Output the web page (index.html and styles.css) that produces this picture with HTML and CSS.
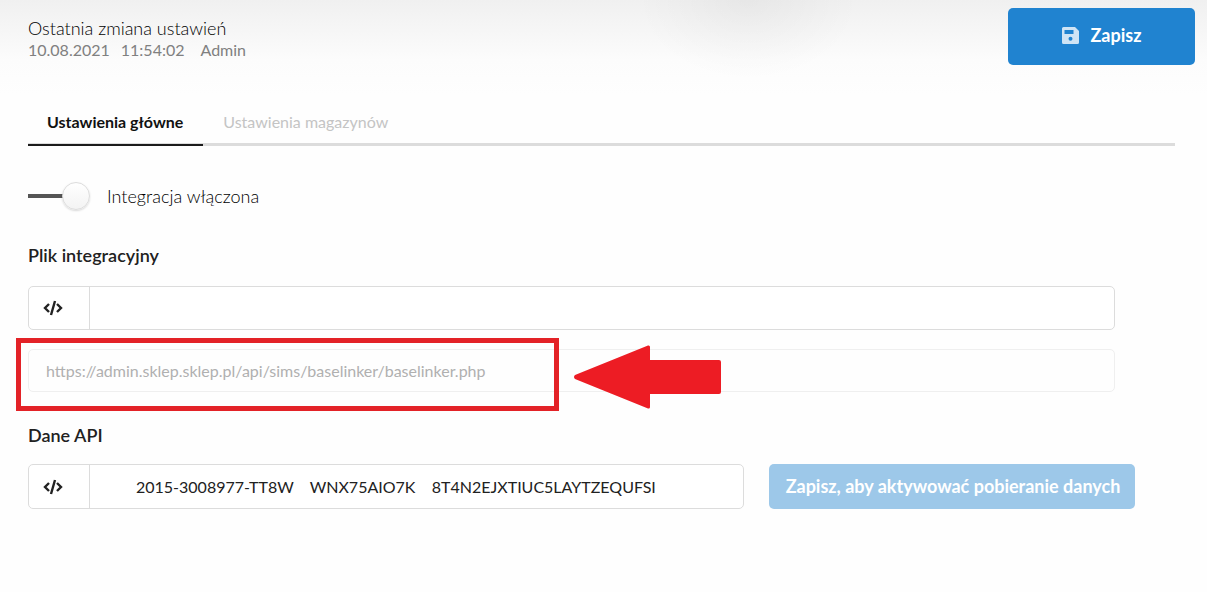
FILE: index.html
```
<!DOCTYPE html>
<html lang="pl">
<head>
    <meta charset="UTF-8">
    <meta name="viewport" content="width=device-width, initial-scale=1.0">
    <title>Ustawienia integracji</title>
    <link rel="stylesheet" href="styles.css">
</head>
<body>
    <form id="settingsForm">
        <header class="top">
            <div class="last-change">
                <p class="last-title">Ostatnia zmiana ustawień</p>
                <p class="last-info">
                    <span>10.08.2021</span>
                    <span>11:54:02</span>
                    <span class="user">Admin</span>
                </p>
            </div>
            <button type="submit" class="btn btn-save">
                <svg class="icon-save" viewBox="0 0 17 17" aria-hidden="true">
                    <path fill="currentColor" fill-rule="evenodd" d="M1.500 0h11.500l4 4v11.500a1.500 1.500 0 0 1-1.500 1.500H1.500a1.500 1.500 0 0 1-1.500-1.500V1.500a1.500 1.500 0 0 1 1.500-1.500zM2.500 3v4h9V3zM8.500 9.700a2 2 0 1 0 0 4a2 2 0 1 0 0-4z"/>
                </svg>
                Zapisz
            </button>
        </header>

        <!-- Zakładki -->
        <nav class="tabs">
            <a href="#glowne" class="tab active">Ustawienia główne</a>
            <a href="#magazyny" class="tab">Ustawienia magazynów</a>
        </nav>

        <main class="content" id="glowne">
            <div class="switch">
                <input type="checkbox" id="integracja" name="integracja" checked>
                <label for="integracja">Integracja włączona</label>
            </div>

            <!-- Plik integracyjny -->
            <label class="field-label" for="plik">Plik integracyjny</label>
            <div class="input-group">
                <span class="addon">
                    <svg class="icon-code" viewBox="0 0 20 16" aria-hidden="true">
                        <path d="M6 4L2 8l4 4M14 4l4 4-4 4M12 1L8 15"/>
                    </svg>
                </span>
                <input type="text" id="plik" name="plik">
            </div>
            <div class="url-row">
                <input type="text" class="url" name="url" aria-label="Adres pliku" value="https://admin.sklep.sklep.pl/api/sims/baselinker/baselinker.php" disabled>
                <span class="frame"></span>
                <svg class="arrow" viewBox="0 0 147 64" aria-hidden="true">
                    <path d="M1 30L74 0.500Q76 0 76 2V15H145Q147 15 147 17V47Q147 49 145 49H76V62Q76 64 74 63.500L1 34Q-1 32 1 30z"/>
                </svg>
            </div>

            <!-- Dane API -->
            <label class="field-label" for="api">Dane API</label>
            <div class="api-row">
                <div class="input-group">
                    <span class="addon">
                        <svg class="icon-code" viewBox="0 0 20 16" aria-hidden="true">
                            <path d="M6 4L2 8l4 4M14 4l4 4-4 4M12 1L8 15"/>
                        </svg>
                    </span>
                    <input type="text" id="api" name="api" class="api-key" value="2015-3008977-TT8W    WNX75AIO7K    8T4N2EJXTIUC5LAYTZEQUFSI">
                </div>
                <button type="button" class="btn btn-fetch" disabled>Zapisz, aby aktywować pobieranie danych</button>
            </div>
        </main>
    </form>
</body>
</html>
```
FILE: styles.css
```
* {
    box-sizing: border-box;
}

body {
    margin: 0;
    font-family: Lato, sans-serif;
    font-size: 16px;
    color: #212121;
    background-color: #fefefe;
}

p {
    margin: 0;
}

input, button {
    font-family: inherit;
    font-size: 16px;
    color: inherit;
}

.top {
    display: flex;
    justify-content: space-between;
    align-items: flex-start;
    height: 96px;
    padding: 8px 12px 0 28px;
    background:
        radial-gradient(ellipse 110px 80px at 62% 0, rgba(0, 0, 0, 0.04), rgba(0, 0, 0, 0)),
        linear-gradient(#f0f0f0, #fcfcfc 60px, #fefefe);
}

.last-title {
    margin-top: 9px;
    font-size: 18px;
    font-weight: 300;
    line-height: 22px;
    color: #000;
}

.last-info {
    display: flex;
    gap: 11px;
    line-height: 22px;
    color: #808080;
}

.user {
    margin-left: 5px;
}

.btn {
    border: none;
    border-radius: 5px;
    font-size: 18px;
    font-weight: bold;
    color: #fff;
    background-color: #2083d0;
    cursor: pointer;
}

.btn-save {
    display: flex;
    justify-content: center;
    align-items: center;
    gap: 12px;
    width: 187px;
    height: 57px;
    padding: 0 0 3px;
}

.icon-save {
    width: 17px;
    height: 17px;
    color: #cfe4f5;
}

/* Tabs */
.tabs {
    display: flex;
    margin: 0 32px 0 28px;
    box-shadow: inset 0 -3px #dcdcdc;
}

.tab {
    height: 50px;
    padding: 15px 20px 0;
    line-height: 22px;
    text-decoration: none;
    color: #c4c4c4;
}

.tab.active {
    padding-left: 19px;
    font-weight: bold;
    color: #111;
    border-bottom: 2px solid #1b1b1b;
}

.content {
    padding: 36px 72px 40px 28px;
}

/* Switch */
.switch {
    display: flex;
    align-items: center;
    gap: 17px;
    font-size: 18px;
    font-weight: 300;
    line-height: 26px;
    color: #000;
}

.switch input {
    appearance: none;
    display: flex;
    align-items: center;
    justify-content: flex-end;
    width: 62px;
    height: 28px;
    margin: 0;
    background: linear-gradient(#555, #555) 0 50% / 40px 4px no-repeat;
    cursor: pointer;
}

.switch input::before {
    content: "";
    width: 26px;
    height: 26px;
    border: 1px solid #dcdcdc;
    border-radius: 50%;
    background: linear-gradient(#fff, #f3f3f3);
    box-shadow: 0 1px 2px rgba(0, 0, 0, 0.15);
}

.switch input:not(:checked) {
    justify-content: flex-start;
    background-position: 100% 50%;
}

/* Fields */
.field-label {
    display: block;
    margin-top: 33px;
    margin-bottom: 19px;
    font-size: 18px;
    line-height: 24px;
    font-weight: 600;
}

.input-group {
    display: flex;
    height: 44px;
    margin-right: 20px;
    border: 1px solid #dcdcdc;
    border-radius: 5px;
    background-color: #fff;
}

.addon {
    display: flex;
    align-items: center;
    width: 61px;
    padding-left: 14px;
    border-right: 1px solid #dcdcdc;
}

.icon-code {
    width: 20px;
    height: 16px;
    fill: none;
    stroke: #222;
    stroke-width: 2.400;
}

.input-group input {
    flex: 1;
    min-width: 0;
    padding: 0 16px;
    border: none;
    background: none;
}

.input-group .api-key {
    padding-left: 46px;
}

.url-row {
    position: relative;
    margin: 19px 20px 31px 0;
}

.url-row + .field-label {
    margin-top: 0;
    margin-bottom: 17px;
}

.url {
    display: block;
    width: 100%;
    height: 43px;
    padding: 0 17px;
    border: 1px solid #efefef;
    border-radius: 5px;
    color: #b0b0b0;
    background-color: #fefefe;
}

/* Highlight over the address */
.frame {
    position: absolute;
    top: -11px;
    left: -12px;
    width: 543px;
    height: 73px;
    border: 5px solid #e32227;
}

.arrow {
    position: absolute;
    top: -4px;
    left: 546px;
    width: 147px;
    height: 64px;
    fill: #ed1c24;
}

.api-row {
    display: flex;
    gap: 25px;
}

.api-row .input-group {
    flex: 1;
    height: 45px;
    margin-right: 0;
}

.btn-fetch {
    width: 366px;
    height: 45px;
    padding: 0 0 2px 2px;
    background-color: #9dc8e9;
    cursor: default;
}
```
